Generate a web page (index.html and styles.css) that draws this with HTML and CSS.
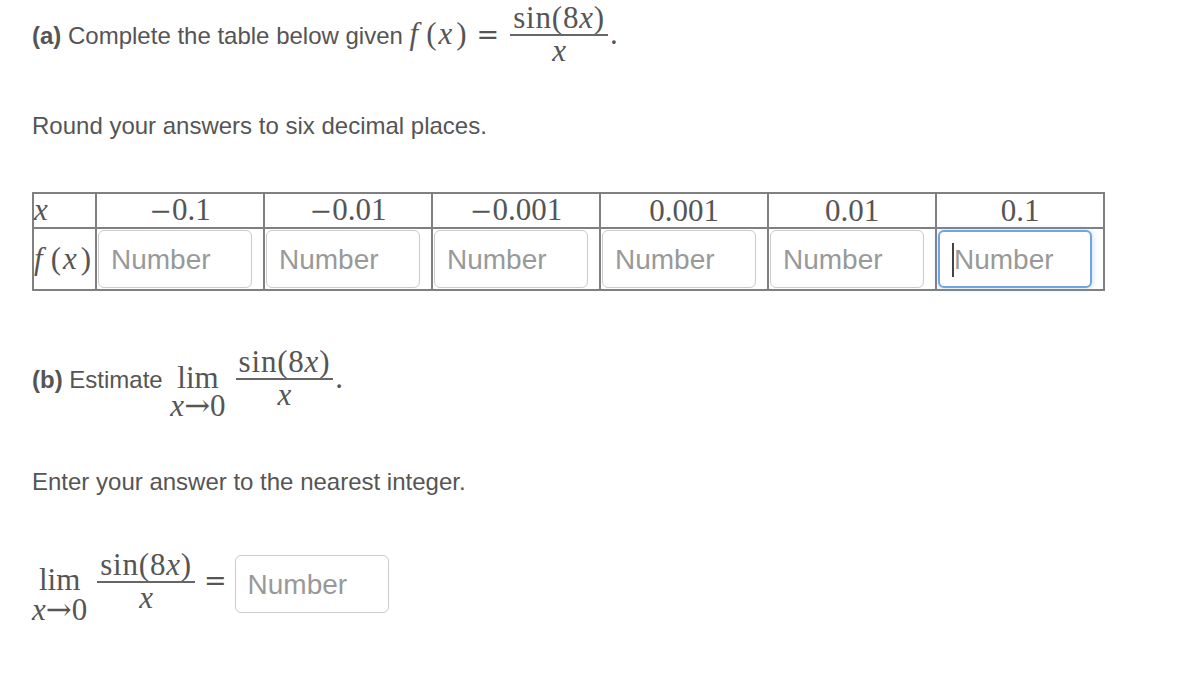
FILE: index.html
```html
<!DOCTYPE html>
<html lang="en">
<head>
<meta charset="utf-8">
<title>Limit table</title>
<link rel="stylesheet" href="styles.css">
</head>
<body>
<div class="page">
  <p class="q q-a"><b>(a)</b> Complete the table below given <span class="m"><span class="mi f">f</span><span class="paren">(</span><span class="mi xv">x</span><span class="paren">)</span><span class="eq">=</span><span class="frac"><span class="num">sin(8<span class="mi">x</span>)</span><span class="bar"></span><span class="den"><span class="mi">x</span></span></span><span class="dot">.</span></span></p>

  <p class="note note-a">Round your answers to six decimal places.</p>

  <table class="grid">
    <colgroup>
      <col class="c-first">
      <col class="c-val"><col class="c-val"><col class="c-val"><col class="c-val"><col class="c-val"><col class="c-val">
    </colgroup>
    <tr class="row-x">
      <td class="lbl"><span class="m mi">x</span></td>
      <td class="val m"><span class="minus">−</span>0.1</td>
      <td class="val m"><span class="minus">−</span>0.01</td>
      <td class="val m"><span class="minus">−</span>0.001</td>
      <td class="val m">0.001</td>
      <td class="val m">0.01</td>
      <td class="val m">0.1</td>
    </tr>
    <tr class="row-f">
      <td class="lbl"><span class="m"><span class="mi f">f</span><span class="paren">(</span><span class="mi xv">x</span>)</span></td>
      <td class="cell"><input class="box" type="text" placeholder="Number"></td>
      <td class="cell"><input class="box" type="text" placeholder="Number"></td>
      <td class="cell"><input class="box" type="text" placeholder="Number"></td>
      <td class="cell"><input class="box" type="text" placeholder="Number"></td>
      <td class="cell"><input class="box" type="text" placeholder="Number"></td>
      <td class="cell"><span class="focus-wrap"><input class="box box-focus" type="text" placeholder="Number"><span class="caret"></span></span></td>
    </tr>
  </table>

  <p class="q q-b"><b>(b)</b> Estimate <span class="m"><span class="lim lim-1"><span class="lim-word">lim</span><span class="lim-sub"><span class="mi">x</span><span class="arr">→</span>0</span></span><span class="frac"><span class="num">sin(8<span class="mi">x</span>)</span><span class="bar"></span><span class="den"><span class="mi">x</span></span></span><span class="dot">.</span></span></p>

  <p class="note note-b">Enter your answer to the nearest integer.</p>

  <p class="answer"><span class="m"><span class="lim lim-2"><span class="lim-word">lim</span><span class="lim-sub"><span class="mi">x</span><span class="arr">→</span>0</span></span><span class="frac"><span class="num">sin(8<span class="mi">x</span>)</span><span class="bar"></span><span class="den"><span class="mi">x</span></span></span><span class="eq eq-b">=</span></span><input class="box box-answer" type="text" placeholder="Number"></p>
</div>
</body>
</html>
```

FILE: styles.css
```css
html, body {
  margin: 0;
  background: #ffffff;
}

body {
  font-family: "Liberation Sans", Arial, Helvetica, sans-serif;
  font-size: 24px;
  color: #555555;
}

.page {
  padding: 0 32px;
}

b {
  font-weight: bold;
}

/* math */
.m {
  font-family: "Liberation Serif", "Times New Roman", serif;
  font-size: 31px;
  color: #555555;
}

.mi {
  font-style: italic;
}

.f {
  margin-right: 8px;
}

.xv {
  margin: 0 4px 0 2px;
}

.eq {
  font-family: "DejaVu Serif", serif;
  font-size: 27px;
  margin: 0 11px 0 10px;
}

.minus {
  font-family: "DejaVu Serif", serif;
  font-size: 27px;
}

.arr {
  font-family: "DejaVu Serif", serif;
  font-size: 31px;
}

.frac {
  display: inline-flex;
  flex-direction: column;
  align-items: center;
  vertical-align: middle;
}

.frac .num {
  line-height: 30px;
  padding: 0 3px 1px;
  letter-spacing: 0.8px;
}

.frac .den {
  line-height: 30px;
  padding: 0 3px 4px;
}

.frac .bar {
  align-self: stretch;
  border-top: 2px solid #666666;
}

.dot {
  margin-left: 2px;
}

/* part a */
.q {
  margin: 0;
}

.q-a {
  padding-top: 3px;
  line-height: 30px;
}

.note {
  margin: 0;
  line-height: 30px;
}

.note-a {
  margin-top: 41px;
}

/* table */
.grid {
  border-collapse: collapse;
  table-layout: fixed;
  width: 1071px;
  margin-top: 51px;
}

.c-first {
  width: 63px;
}

.c-val {
  width: 168px;
}

.grid td {
  border: 2px solid #808080;
  padding: 0;
}

.row-x td {
  height: 33px;
  line-height: 30px;
}

.row-x .val {
  text-align: center;
}

.row-f td {
  height: 60px;
}

.lbl {
  padding-left: 1px;
  white-space: nowrap;
}

.lbl .f {
  margin-right: 8px;
}

.lbl .xv {
  margin: 0 4px 0 2px;
}

.cell {
  vertical-align: middle;
}

.box {
  display: block;
  box-sizing: border-box;
  width: 154px;
  height: 58px;
  margin: 0 0 0 1px;
  border: 1px solid #cccccc;
  border-radius: 6px;
  padding: 2px 0 0 12px;
  font-family: "Liberation Sans", Arial, Helvetica, sans-serif;
  font-size: 28px;
  color: #555555;
  background: #ffffff;
  outline: none;
}

.box::placeholder {
  color: #999999;
  opacity: 1;
}

.focus-wrap {
  position: relative;
  display: block;
}

.box-focus {
  border: 2px solid #72a3e2;
  box-shadow: 0 0 6px rgba(114, 163, 226, 0.45);
  padding-left: 14px;
}

.caret {
  position: absolute;
  left: 15px;
  top: 13px;
  width: 2px;
  height: 34px;
  background: #444444;
}

/* part b */
.q-b {
  margin-top: 56px;
  line-height: 30px;
}

.lim {
  display: inline-flex;
  flex-direction: column;
  align-items: center;
  vertical-align: baseline;
  margin: 0 10px 0 1px;
}

.lim-word {
  line-height: 30px;
}

.lim-sub {
  line-height: 28px;
  white-space: nowrap;
}

.lim-1 .lim-sub {
  line-height: 25px;
}

.lim-2 {
  margin-left: 0;
  margin-right: 10px;
}

.note-b {
  margin-top: 49px;
}

.answer {
  margin: 53px 0 0;
  line-height: 30px;
}

.eq-b {
  margin: 0 8px 0 9px;
}

.box-answer {
  display: inline-block;
  vertical-align: middle;
  margin: 0;
}
```
